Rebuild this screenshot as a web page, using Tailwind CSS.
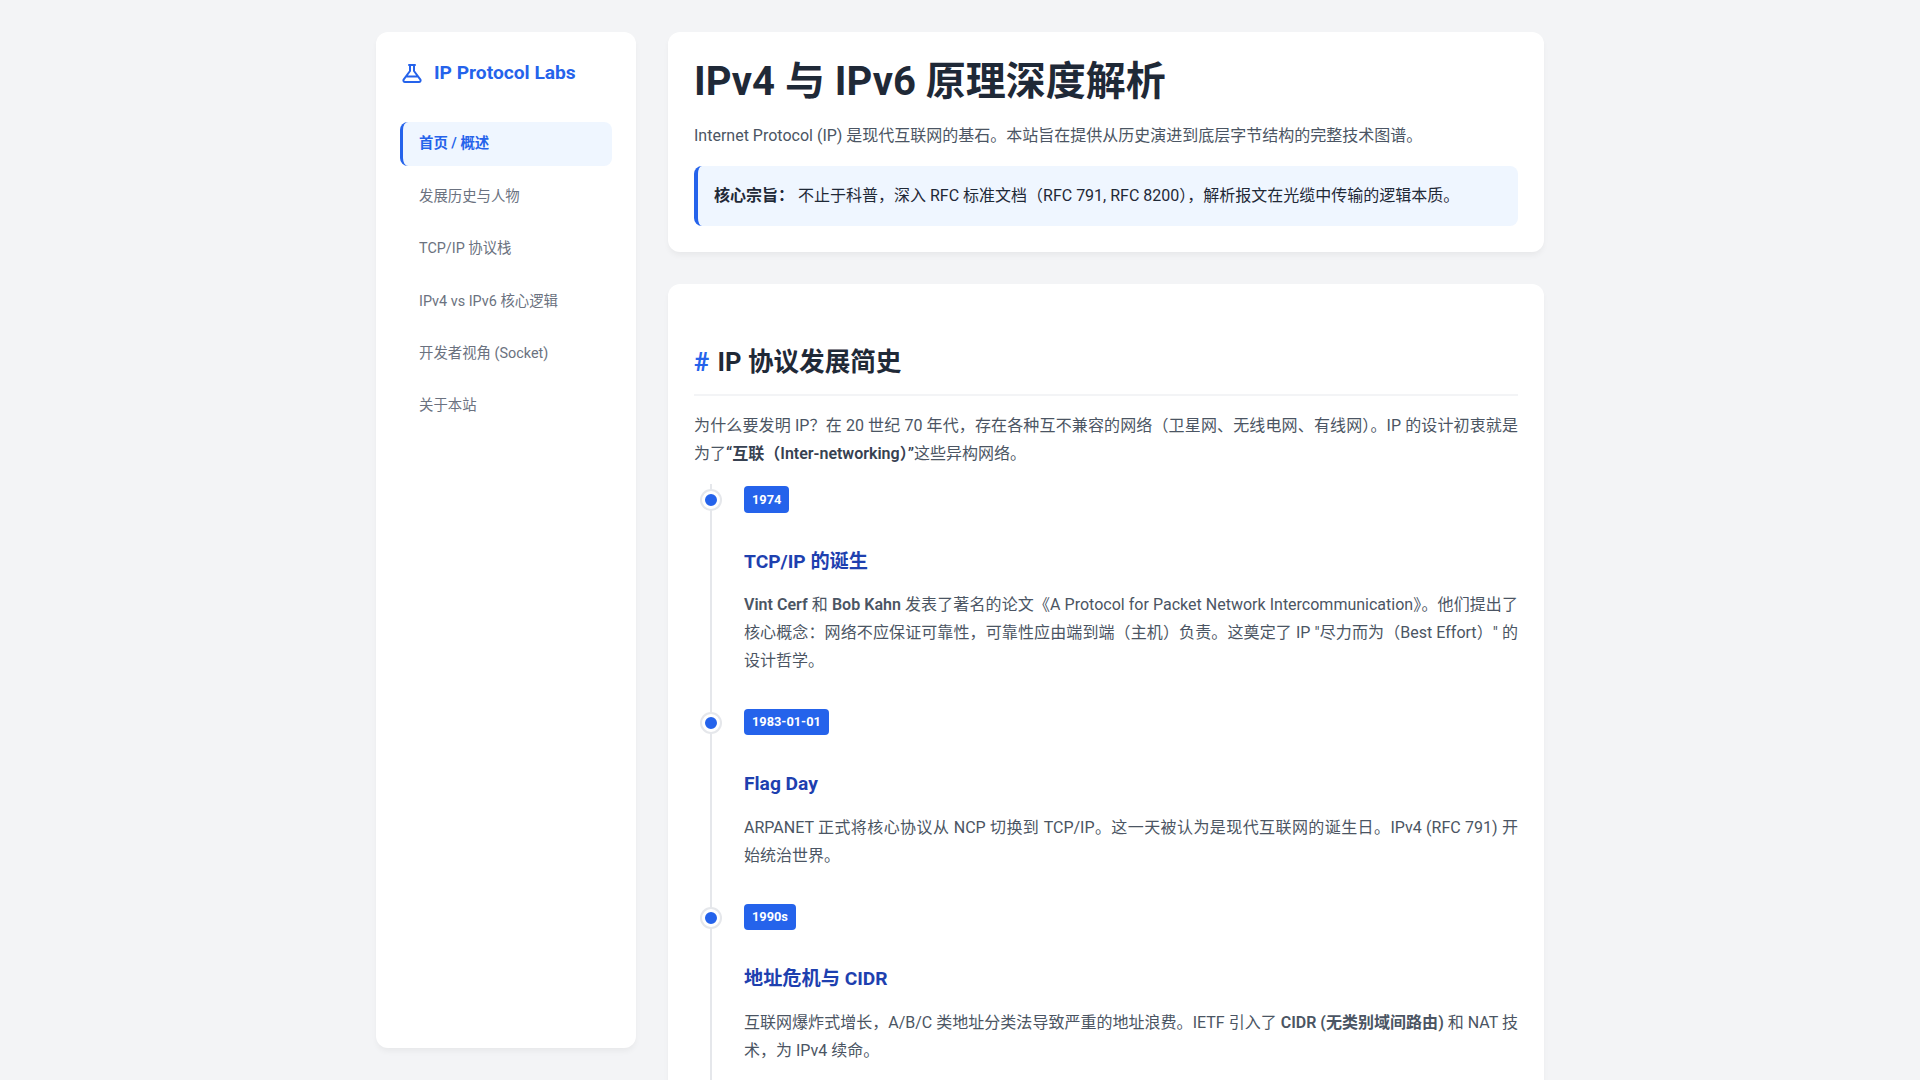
<!DOCTYPE html>
<html lang="zh-CN">
<head>
  <meta charset="UTF-8" />
  <meta name="viewport" content="width=device-width, initial-scale=1" />
  <title>IP Protocol Labs</title>
  <script src="https://cdn.jsdelivr.net/npm/@tailwindcss/browser@4"></script>
</head>
<body class="bg-[#f3f4f6] font-['Roboto','Noto_Sans_CJK_SC',sans-serif] text-[#374151]">
  <div class="h-screen overflow-hidden">
    <div class="max-w-[1200px] mx-auto px-4 py-8 flex gap-8 items-start">

      <aside class="w-[260px] h-[1016px] shrink-0 bg-white rounded-xl shadow-[0_4px_6px_-1px_rgba(0,0,0,0.05)] p-6">
        <div class="flex items-center gap-[10px] mb-8 text-[#2563eb] font-bold text-[19.2px] h-[34px]">
          <svg class="w-6 h-6" viewBox="0 0 24 24" fill="none" stroke="currentColor" stroke-width="2" stroke-linecap="round" stroke-linejoin="round">
            <path d="M9 4h6M10 4v6L3.6 18.6A1.6 1.6 0 0 0 5 21h14a1.6 1.6 0 0 0 1.4-2.4L14 10V4M7 15.5h10"/>
          </svg>
          <span>IP Protocol Labs</span>
        </div>
        <nav class="flex flex-col gap-2 text-[14.4px]">
          <a class="h-[44.4px] flex items-center pl-4 border-l-[3px] border-[#2563eb] rounded-lg bg-[#eff6ff] text-[#2563eb] font-semibold">首页 / 概述</a>
          <a class="h-[44.4px] flex items-center pl-4 border-l-[3px] border-transparent text-[#6b7280]">发展历史与人物</a>
          <a class="h-[44.4px] flex items-center pl-4 border-l-[3px] border-transparent text-[#6b7280]">TCP/IP 协议栈</a>
          <a class="h-[44.4px] flex items-center pl-4 border-l-[3px] border-transparent text-[#6b7280]">IPv4 vs IPv6 核心逻辑</a>
          <a class="h-[44.4px] flex items-center pl-4 border-l-[3px] border-transparent text-[#6b7280]">开发者视角 (Socket)</a>
          <a class="h-[44.4px] flex items-center pl-4 border-l-[3px] border-transparent text-[#6b7280]">关于本站</a>
        </nav>
      </aside>

      <main class="flex-1 min-w-0 flex flex-col gap-8">
        <section class="bg-white rounded-xl shadow-[0_4px_6px_-1px_rgba(0,0,0,0.05)] p-[26px]">
          <h1 class="text-[40px] leading-[1.2] font-bold text-[#1f2937] mb-4">IPv4 与 IPv6 原理深度解析</h1>
          <p class="text-[#4b5563] leading-7">Internet Protocol (IP) 是现代互联网的基石。本站旨在提供从历史演进到底层字节结构的完整技术图谱。</p>
          <div class="mt-4 border-l-4 border-[#2563eb] bg-[#eff6ff] rounded-lg px-4 py-4 leading-7 text-[#1f2937]">
            <strong class="font-semibold">核心宗旨：</strong> 不止于科普，深入 RFC 标准文档（RFC 791, RFC 8200），解析报文在光缆中传输的逻辑本质。
          </div>
        </section>

        <section class="bg-white rounded-xl shadow-[0_4px_6px_-1px_rgba(0,0,0,0.05)] px-[26px] pt-[62px] pb-8">
          <h2 class="text-[25.6px] leading-[1.3] font-bold text-[#1f2937] pb-[15px] border-b-2 border-[#f3f4f6] mb-4"><span class="text-[#2563eb] mr-[2px]">#</span> IP 协议发展简史</h2>
          <p class="text-[#4b5563] leading-7 text-justify mb-4">为什么要发明 IP？在 20 世纪 70 年代，存在各种互不兼容的网络（卫星网、无线电网、有线网）。IP 的设计初衷就是为了<strong class="font-semibold text-[#374151]">“互联（Inter-networking）”</strong>这些异构网络。</p>

          <div class="border-l-2 border-[#e5e7eb] ml-4 pl-8 pt-[2px]">
            <div class="relative pb-[33.6px]">
              <div class="absolute left-[-42px] top-[5px] w-[18px] h-[18px] rounded-full bg-[#2563eb] border-[3px] border-white shadow-[0_0_0_2px_#e5e7eb] box-border"></div>
              <span class="block w-fit bg-[#2563eb] text-white text-[12.8px] font-bold px-2 py-[2.4px] rounded leading-[21.76px]">1974</span>
              <h3 class="mt-9 mb-[17.5px] text-[19.2px] leading-[25px] font-bold text-[#1e40af]">TCP/IP 的诞生</h3>
              <p class="text-[#4b5563] leading-7 text-justify"><strong class="font-semibold">Vint Cerf</strong> 和 <strong class="font-semibold">Bob Kahn</strong> 发表了著名的论文《A Protocol for Packet Network Intercommunication》。他们提出了核心概念：网络不应保证可靠性，可靠性应由端到端（主机）负责。这奠定了 IP "尽力而为（Best Effort）" 的设计哲学。</p>
            </div>
            <div class="relative pb-[33.6px]">
              <div class="absolute left-[-42px] top-[5px] w-[18px] h-[18px] rounded-full bg-[#2563eb] border-[3px] border-white shadow-[0_0_0_2px_#e5e7eb] box-border"></div>
              <span class="block w-fit bg-[#2563eb] text-white text-[12.8px] font-bold px-2 py-[2.4px] rounded leading-[21.76px]">1983-01-01</span>
              <h3 class="mt-9 mb-[17.5px] text-[19.2px] leading-[25px] font-bold text-[#1e40af]">Flag Day</h3>
              <p class="text-[#4b5563] leading-7 text-justify">ARPANET 正式将核心协议从 NCP 切换到 TCP/IP。这一天被认为是现代互联网的诞生日。IPv4 (RFC 791) 开始统治世界。</p>
            </div>
            <div class="relative pb-[33.6px]">
              <div class="absolute left-[-42px] top-[5px] w-[18px] h-[18px] rounded-full bg-[#2563eb] border-[3px] border-white shadow-[0_0_0_2px_#e5e7eb] box-border"></div>
              <span class="block w-fit bg-[#2563eb] text-white text-[12.8px] font-bold px-2 py-[2.4px] rounded leading-[21.76px]">1990s</span>
              <h3 class="mt-9 mb-[17.5px] text-[19.2px] leading-[25px] font-bold text-[#1e40af]">地址危机与 CIDR</h3>
              <p class="text-[#4b5563] leading-7 text-justify">互联网爆炸式增长，A/B/C 类地址分类法导致严重的地址浪费。IETF 引入了 <strong class="font-semibold">CIDR (无类别域间路由)</strong> 和 NAT 技术，为 IPv4 续命。</p>
            </div>
          </div>
        </section>
      </main>
    </div>
  </div>
</body>
</html>
